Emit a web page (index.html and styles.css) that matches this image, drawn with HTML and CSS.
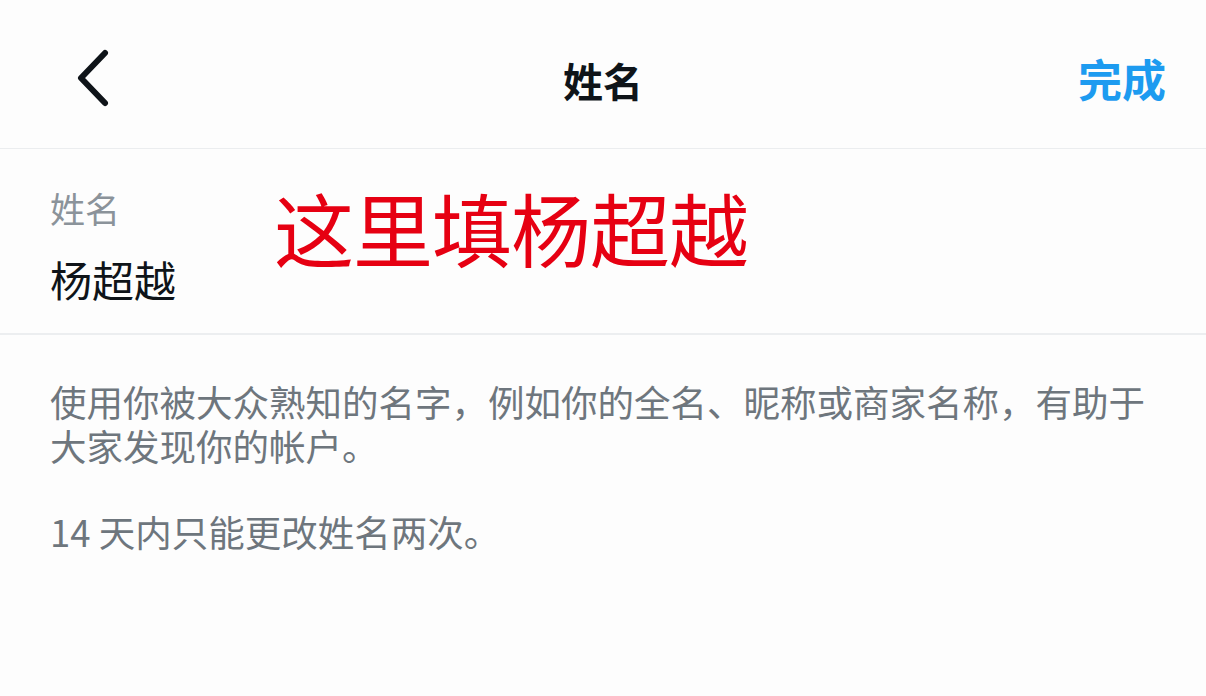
FILE: index.html
```html
<!DOCTYPE html>
<html lang="zh-CN">
<head>
<meta charset="utf-8">
<title>姓名</title>
<link rel="stylesheet" href="styles.css">
</head>
<body>
<div class="screen">
  <header class="nav">
    <button class="nav-back" aria-label="返回">
      <svg width="40" height="60" viewBox="0 0 40 60" fill="none">
        <path d="M30 5 L6 30 L30 55" stroke="#0f1419" stroke-width="6" stroke-linecap="round" stroke-linejoin="round"/>
      </svg>
    </button>
    <h1 class="nav-title">姓名</h1>
    <button class="nav-done">完成</button>
  </header>

  <section class="field">
    <div class="field-main">
      <div class="field-label">姓名</div>
      <div class="field-value">杨超越</div>
    </div>
    <div class="field-note">这里填杨超越</div>
  </section>

  <section class="hint">
    <p>使用你被大众熟知的名字，例如你的全名、昵称或商家名称，有助于大家发现你的帐户。</p>
    <p>14 天内只能更改姓名两次。</p>
  </section>
</div>
</body>
</html>
```

FILE: styles.css
```css
html, body {
  margin: 0;
  padding: 0;
  background: #fdfdfd;
}

body {
  font-family: "Noto Sans CJK SC", "Noto Sans", sans-serif;
  color: #0f1419;
  width: 1206px;
  height: 696px;
  overflow: hidden;
}

.screen {
  display: flex;
  flex-direction: column;
}

/* top navigation bar */
.nav {
  height: 149px;
  display: grid;
  grid-template-columns: 1fr auto 1fr;
  align-items: center;
  padding: 0 40px;
  border-bottom: 1px solid #ebedef;
  box-sizing: border-box;
}

.nav-back {
  justify-self: start;
  background: none;
  border: 0;
  padding: 0;
  display: flex;
  margin: 8px 0 0 35px;
}

.nav-title {
  margin: 12px 0 0;
  font-size: 40px;
  font-weight: 700;
  line-height: 1;
}

.nav-done {
  justify-self: end;
  background: none;
  border: 0;
  padding: 0;
  font-family: inherit;
  font-size: 44px;
  font-weight: 700;
  color: #1d9bf0;
  line-height: 1;
  margin-top: 8px;
}

/* name field */
.field {
  height: 186px;
  box-sizing: border-box;
  border-bottom: 2px solid #eceef0;
  display: flex;
  align-items: flex-start;
  padding: 0 50px;
  gap: 98px;
}

.field-main {
  display: flex;
  flex-direction: column;
}

.field-label {
  font-size: 35px;
  line-height: 1;
  color: #8b939a;
  margin-top: 41px;
}

.field-value {
  font-size: 42px;
  line-height: 1;
  color: #0f1419;
  margin-top: 33px;
}

.field-note {
  font-size: 80px;
  line-height: 1;
  color: #e60012;
  margin-top: 37px;
  letter-spacing: -1px;
}

/* helper text */
.hint {
  padding: 45px 50px 0;
}

.hint p {
  margin: 0 0 42px;
  font-size: 36.5px;
  line-height: 44px;
  color: #6e767d;
}
```
